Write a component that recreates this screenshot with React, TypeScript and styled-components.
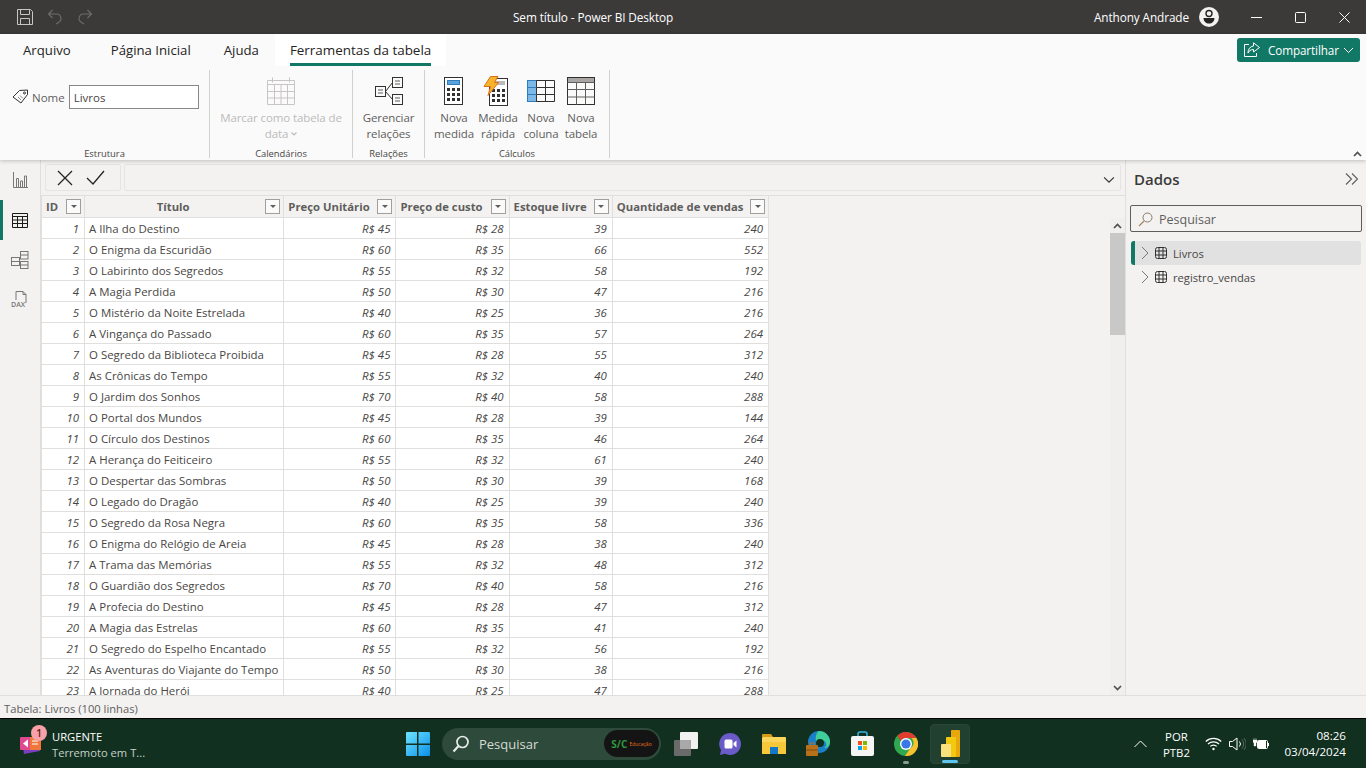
import React from "react";
import styled, { createGlobalStyle } from "styled-components";

const FONT = `"Open Sans", "Noto Sans", "Liberation Sans", sans-serif`;

const Global = createGlobalStyle`
  html, body { margin: 0; padding: 0; height: 100%; overflow: hidden; }
  body { font-family: ${FONT}; font-size: 12px; color: #323130; background: #f3f2f1; }
  * { box-sizing: border-box; }
`;

const Page = styled.div`
  width: 1366px; height: 768px; display: flex; flex-direction: column; overflow: hidden;
`;

/* ---------- title bar ---------- */
const TitleBar = styled.header`
  height: 34px; flex: none; background: #3b3a39; color: #fff; display: grid;
  grid-template-columns: 513px auto 1fr; align-items: center;
`;
const QuickAccess = styled.div`
  display: flex; align-items: center; gap: 14px; padding-left: 17px;
`;
const Title = styled.div`font-size: 11.8px; letter-spacing: -0.1px;`;
const WindowSide = styled.div`display: flex; align-items: center; justify-content: flex-end;`;
const UserName = styled.span`font-size: 11.8px; letter-spacing: -0.1px; margin-right: 10px;`;
const WinButton = styled.div`
  width: 44px; height: 34px; display: flex; align-items: center; justify-content: center;
`;
const Avatar = styled.div`display:flex; margin-right: 15px;`;

/* ---------- ribbon ---------- */
const Ribbon = styled.section`
  height: 126px; flex: none; background: #fafafa; position: relative; z-index: 2;
  box-shadow: 0 1px 4px rgba(0,0,0,.22); display: flex; flex-direction: column;
`;
const TabRow = styled.nav`
  height: 32px; display: flex; align-items: stretch; padding-right: 6px; position: relative;
`;
const Tab = styled.div<{ $active?: boolean; $left: number; $pad: number }>`
  margin-left: ${p => p.$left}px; padding: 0 ${p => p.$pad}px; font-size: ${p => (p.$active ? 13.45 : 13.2)}px;
  display: flex; align-items: center; color: #252423; position: relative;
  background: ${p => (p.$active ? "#fff" : "transparent")};
  ${p => p.$active && `
    font-weight: 500;
    &::after { content: ""; position: absolute; left: ${p.$pad}px; right: ${p.$pad}px; bottom: 0; height: 3px; background: #117865; }
  `}
`;
const ShareButton = styled.button`
  margin-left: auto; margin-top: 4px; width: 123px; height: 24px; background: #117865; color: #fff;
  border: 0; border-radius: 3px; display: flex; align-items: center; gap: 8px; padding: 0 0 0 7px;
  font: 11.7px ${FONT}; letter-spacing: -0.1px;
`;
const ShareCaret = styled.span`display: flex; margin-left: -4px;`;
const Groups = styled.div`display: flex; padding-top: 4px;`;
const Group = styled.div<{ $w: number }>`
  width: ${p => p.$w}px; height: 88px; border-right: 1px solid #d2d0ce; display: flex; flex-direction: column;
`;
const GroupBody = styled.div<{ $shift?: number }>`
  flex: 1; display: flex; justify-content: center; min-height: 0; padding-right: ${p => p.$shift ?? 0}px;
`;
const GroupLabel = styled.div`
  height: 14px; line-height: 14px; text-align: center; font-size: 9.4px; color: #484644;
  margin-top: 1px; margin-bottom: -3px;
`;
const RibbonBtn = styled.div<{ $w: number; $disabled?: boolean }>`
  width: ${p => p.$w}px; display: flex; flex-direction: column; align-items: center;
  color: ${p => (p.$disabled ? "#bdbbb9" : "#605e5c")}; text-align: center;
  font-size: 11.5px; line-height: 16px; padding-top: 6px; letter-spacing: -0.1px; white-space: nowrap;
`;
const RibbonIcon = styled.div<{ $nudge?: number }>`
  height: 30px; margin-bottom: 4px; display: flex; align-items: center; justify-content: center;
  padding-right: ${p => p.$nudge ?? 0}px;
`;
const NameField = styled.div`
  display: flex; align-items: flex-start; padding-top: 15px; gap: 4px; width: 100%; padding-left: 12px;
  font-size: 11.5px; color: #605e5c;
`;
const TagSlot = styled.span`display: flex; margin-top: 4px; margin-right: -1px;`;
const NameLabel = styled.span`line-height: 26px;`;
const NameInput = styled.div`
  width: 130px; height: 24px; border: 1px solid #8a8886; background: #fff; padding-left: 4px;
  line-height: 24px; color: #484644; font-size: 11.5px;
`;
const DataLine = styled.span`display: flex; align-items: center; gap: 3px;`;
const Collapse = styled.div`position: absolute; right: 4px; bottom: 3px; display: flex;`;

/* ---------- main ---------- */
const Main = styled.main`flex: 1; min-height: 0; display: flex;`;
const Nav = styled.aside`
  width: 41px; flex: none; border-right: 1px solid #e1dfdd; background: #f3f2f1;
  display: flex; flex-direction: column;
`;
const NavItem = styled.div<{ $active?: boolean }>`
  height: 40px; display: flex; align-items: center; justify-content: center; position: relative;
  ${p => p.$active && `box-shadow: inset 3px 0 0 #117865;`}
`;
const Center = styled.div`flex: 1; min-width: 0; display: flex; flex-direction: column;`;
const FormulaBar = styled.div`
  height: 36px; flex: none; display: flex; gap: 3px; padding: 4px; border-bottom: 1px solid #e1dfdd;
`;
const FormulaActions = styled.div`
  width: 76px; border: 1px solid #e6e4e2; border-radius: 2px; display: flex; align-items: center;
  justify-content: center; gap: 13px; padding-right: 4px;
`;
const FormulaInput = styled.div`
  flex: 1; border: 1px solid #e6e4e2; border-radius: 2px; display: flex; align-items: center;
  justify-content: flex-end; padding: 5px 5px 0 0;
`;
const GridArea = styled.div`flex: 1; min-height: 0; display: flex; justify-content: space-between;`;
const TableClip = styled.div`flex: 1; min-width: 0; overflow: hidden;`;
const DataTable = styled.table`
  border-collapse: collapse; table-layout: fixed; width: 728px; background: #fff; font-size: 11.45px;
`;
const Head = styled.th<{ $w: number }>`
  width: ${p => p.$w}px; height: 21px; padding: 1px 3px 0 4px; background: #f3f2f1; color: #605e5c;
  border: 1px solid #e1dfdd; border-top: 0; font-weight: 700; font-size: 11.3px; white-space: nowrap;
`;
const HeadInner = styled.div`
  display: flex; align-items: center; justify-content: space-between;
`;
const HeadText = styled.span<{ $center?: boolean }>`
  ${p => p.$center && `flex: 1; text-align: center; padding-right: 8px;`}
`;
const FilterBtn = styled.span`
  width: 15px; height: 15px; border: 1px solid #a19f9d; background: #fafafa; flex: none;
  display: flex; align-items: center; justify-content: center;
  &::before { content: ""; border: 3px solid transparent; border-top: 3px solid #605e5c; border-bottom: 0; }
`;
const Cell = styled.td<{ $num?: boolean }>`
  height: 21px; padding: 1px 5px 0 4px; border: 1px solid #e1dfdd; white-space: nowrap; overflow: hidden;
  color: #484644;
  ${p => p.$num && `text-align: right; font-style: italic;`}
`;
const Scrollbar = styled.div`
  width: 15px; flex: none; margin-top: 22px; display: flex; flex-direction: column; background: #f3f2f1;
`;
const ScrollArrow = styled.div`height: 15px; flex: none; display: flex; align-items: center; justify-content: center; background: #f0efee;`;
const ScrollTrack = styled.div`flex: 1; background: #f0efee;`;
const ScrollThumb = styled.div`height: 102px; background: #c8c8c8;`;

/* ---------- right panel ---------- */
const Panel = styled.aside`
  width: 241px; flex: none; border-left: 1px solid #e1dfdd; background: #f3f2f1; padding: 0 4px;
`;
const PanelHead = styled.div`
  height: 39px; display: flex; align-items: center; justify-content: space-between;
  padding: 0 3px 2px 4px; font-size: 15px; font-weight: 600; color: #3b3a39;
`;
const SearchBox = styled.div`
  margin-top: 6px; height: 27px; border: 1px solid #605e5c; border-radius: 2px; display: flex; align-items: center;
  padding: 1px 0 0 7px; gap: 6px; font-size: 12.5px; color: #605e5c; margin-bottom: 9px;
`;
const TreeRow = styled.div<{ $selected?: boolean }>`
  height: 24px; margin-left: 1px; width: 230px; display: flex; align-items: center; padding-left: 10px; gap: 6px;
  font-size: 11.2px; color: #484644; border-radius: 3px;
  ${p => p.$selected && `background: #e1e1e1; border-left: 4px solid #117865; padding-left: 6px;`}
`;

/* ---------- status ---------- */
const StatusBar = styled.footer`
  height: 24px; flex: none; background: #f3f2f1; border-top: 1px solid #e1dfdd; border-bottom: 1px solid #000;
  padding-left: 4px; line-height: 26px; font-size: 11.2px; color: #605e5c;
`;

/* ---------- taskbar ---------- */
const Taskbar = styled.div`
  height: 49px; flex: none; background: #12301f; color: #fff; display: grid;
  grid-template-columns: 406px auto 1fr; align-items: center; font-size: 11.2px;
`;
const News = styled.div`display: flex; align-items: center; padding-left: 20px; gap: 6px;`;
const NewsIcon = styled.div`position: relative; width: 26px; height: 26px; display: flex; margin-top: 3px;`;
const Badge = styled.span`
  position: absolute; right: -1px; top: -7px; width: 16px; height: 16px; border-radius: 50%; background: #f9a0a8;
  color: #5a2020; font-size: 10px; font-weight: 600; line-height: 16px; text-align: center;
`;
const NewsText = styled.div`display: flex; flex-direction: column; line-height: 16px; margin-top: 3px;`;
const NewsSub = styled.span`color: #c6d0ca;`;
const TaskCenter = styled.div`display: flex; align-items: center;`;
const StartIcon = styled.div`display: flex; margin-right: 12px;`;
const SearchPill = styled.div`
  width: 219px; height: 32px; border-radius: 16px; background: #2e4a3a; display: flex; align-items: center;
  padding: 0 2px 0 10px; gap: 9px; font-size: 13px; color: #d5dcd8; margin-right: 3px;
`;
const PillLogo = styled.div`
  margin-left: auto; width: 55px; height: 27px; border-radius: 14px; background: #141414; display: flex;
  align-items: center; justify-content: center; gap: 2px; color: #2e9a3f; font-size: 10px; font-weight: 700;
`;
const PillLogoSub = styled.span`color: #e8701a; font-size: 5px; font-weight: 400;`;
const TaskIcon = styled.div<{ $active?: boolean }>`
  width: 44px; height: 40px; display: flex; align-items: center; justify-content: center; position: relative; border-radius: 4px;
  ${p => p.$active && `background: #22402f; border: 1px solid #2a4636; width: 40px; margin-left: 2px;`}
`;
const Indicator = styled.span<{ $on?: boolean }>`
  position: absolute; bottom: 0; left: 50%; transform: translateX(-50%); height: 3px; border-radius: 2px;
  width: ${p => (p.$on ? 16 : 6)}px; background: ${p => (p.$on ? "#5cc4f0" : "#8a9a90")};
`;
const Tray = styled.div`display: flex; align-items: center; justify-content: flex-end; padding-right: 20px;`;
const Lang = styled.div`
  text-align: center; line-height: 16px; font-size: 11.4px; width: 36px; margin: 2px 11px 0 11px;
`;
const TrayIcons = styled.div`display: flex; align-items: center; gap: 7px; margin-right: 15px;`;
const Clock = styled.div`text-align: right; line-height: 16px; font-size: 11.6px;`;

/* ---------- icons ---------- */
const SaveIcon = () => (
  <svg width="16" height="16" viewBox="0 0 16 16" fill="none" stroke="#c8c6c4">
    <path d="M.5.5h13l2 2v13H.5z" /><path d="M3.5.5v5h9v-5M3.5 15.5v-6h9v6" />
  </svg>
);
const UndoIcon = ({ flip }: { flip?: boolean }) => (
  <svg width="16" height="16" viewBox="0 0 16 16" fill="none" stroke="#6f6d6b" strokeWidth="1.1" style={flip ? { transform: "scaleX(-1)" } : undefined}>
    <path d="M5.5 1 1.5 5l4 4M1.5 5h8a4.5 4.5 0 0 1 2 8.5L9 15" />
  </svg>
);
const PersonIcon = () => (
  <svg width="20" height="20" viewBox="0 0 20 20">
    <circle cx="10" cy="10" r="10" fill="#f3f2f1" />
    <circle cx="10" cy="6.5" r="3" fill="none" stroke="#252423" strokeWidth="1.4" />
    <path d="M4.5 11h11c0 3.5-2.5 5.5-5.5 5.5S4.5 14.5 4.5 11z" fill="#252423" />
  </svg>
);
const MinIcon = () => <svg width="11" height="11" viewBox="0 0 11 11"><path d="M0 5.5h11" stroke="#fff" /></svg>;
const MaxIcon = () => <svg width="11" height="11" viewBox="0 0 11 11"><rect x=".5" y=".5" width="10" height="10" rx="1" fill="none" stroke="#fff" /></svg>;
const CloseIcon = () => <svg width="11" height="11" viewBox="0 0 11 11"><path d="m.5.5 10 10m0-10-10 10" stroke="#fff" /></svg>;
const ShareIcon = () => (
  <svg width="16" height="16" viewBox="0 0 16 16" fill="none" stroke="#fff">
    <path d="M5 2.5H.5v12h12V11" /><path d="M9.5.8 15.5 5.5l-6 4.5V7.5C6.5 7.5 5 9 4 11c0-4 2-6.500 5.500-7z" strokeLinejoin="round" />
  </svg>
);
const Chevron = ({ c = "#fff", s = 11 }: { c?: string; s?: number }) => (
  <svg width={s} height={s} viewBox="0 0 11 11" fill="none" stroke={c}><path d="m1 3 4.500 4.500L10 3" /></svg>
);
const MiniChevron = () => (
  <svg width="6" height="4" viewBox="0 0 6 4" fill="none" stroke="#bdbbb9" strokeWidth="1.200"><path d="m.5.5 2.500 2.500L5.500.5" /></svg>
);
const TagIcon = () => (
  <svg width="17" height="15" viewBox="0 0 17 15" fill="none" stroke="#323130" strokeWidth="1">
    <path d="M1 8 7.500 1.500 15.500 1v4.500L9 14z" strokeLinejoin="round" /><circle cx="12.500" cy="4" r="1" /><path d="m6 8 3 3M8 6.500l3 3" stroke="#8a8886" />
  </svg>
);
const CalendarIcon = () => (
  <svg width="28" height="28" viewBox="0 0 28 28" fill="none" stroke="#c8c6c4">
    <path d="M.5 3.500h27v24H.5zM.5 7.500h27M.5 14.500h27M.5 21h27M7.500 7.500v20M14 7.500v20M20.500 7.500v20M5.500.5v5M22.500.5v5" />
  </svg>
);
const RelationsIcon = () => (
  <svg width="28" height="28" viewBox="0 0 28 28" fill="none" stroke="#323130">
    <rect x=".5" y="9.500" width="10" height="10" /><rect x="17.500" y=".5" width="10" height="10" /><rect x="17.500" y="17.500" width="10" height="10" />
    <path d="M3 13h5M3 16h5M20 4h5M20 7h5M20 21h5M20 24h5" stroke="#605e5c" /><path d="m10.500 14.500 7-9M10.500 14.500l7 8" />
  </svg>
);
const Dots = ({ x, y }: { x: number; y: number }) => (
  <g fill="#323130">
    {[0, 1, 2].flatMap(r => [0, 1, 2].map(c => <rect key={`${r}-${c}`} x={x + c * 5} y={y + r * 5} width="3" height="3" />))}
  </g>
);
const MeasureIcon = () => (
  <svg width="20" height="28" viewBox="0 0 20 28">
    <rect x=".5" y=".5" width="18" height="27" fill="#fff" stroke="#323130" />
    <rect x="3.500" y="3.500" width="12" height="4" fill="#5ba4dc" stroke="#2f7dbd" />
    <Dots x={3} y={11} />
  </svg>
);
const QuickIcon = () => (
  <svg width="26" height="30" viewBox="0 0 26 30">
    <rect x="6.500" y="2.500" width="18" height="27" fill="#fff" stroke="#323130" />
    <rect x="10" y="5" width="12" height="4" fill="#bdbbb9" />
    <Dots x={9} y={13} />
    <path d="M7.500.5h7.500l-3.500 6h4L5 19.500l2.500-9H1z" fill="#f7b32b" stroke="#d9701a" />
  </svg>
);
const ColumnIcon = () => (
  <svg width="28" height="22" viewBox="0 0 28 22" fill="none" stroke="#323130">
    <rect x=".5" y=".5" width="9" height="21" fill="#7db8e6" stroke="#2f7dbd" />
    <path d="M9.500.5h18v21h-18zM18.500.5v21M9.500 7.500h18M9.500 14.500h18" />
    <path d="M.5 7.500h9M.5 14.500h9" stroke="#2f7dbd" />
  </svg>
);
const TableIcon = () => (
  <svg width="28" height="28" viewBox="0 0 28 28" fill="none" stroke="#605e5c">
    <rect x=".5" y=".5" width="27" height="27" stroke="#323130" />
    <rect x="1" y="1" width="26" height="4" fill="#a8a6a4" stroke="none" />
    <path d="M.5 5.500h27M.5 12.500h27M.5 20h27M9.500 5.500v22M18.500 5.500v22" />
  </svg>
);
const NavReport = () => (
  <svg width="15" height="16" viewBox="0 0 15 16" fill="none" stroke="#797775">
    <path d="M.5 0v15.500H15M3.500 15V6.500h2V15M7.500 15V9h2v6M11.500 15V4h2v11" />
  </svg>
);
const NavTable = () => (
  <svg width="16" height="15" viewBox="0 0 16 15" fill="none" stroke="#1b1a19">
    <path d="M.5.500h15v14H.5zM.5 3.500h15M.5 7h15M.5 10.500h15M5.500 3.500v11M10.500 3.500v11" />
  </svg>
);
const NavModel = () => (
  <svg width="18" height="18" viewBox="0 0 18 18" fill="none" stroke="#797775">
    <rect x=".5" y="6.500" width="8" height="8" /><rect x="9.500" y=".5" width="7.500" height="7.500" /><rect x="9.500" y="10.500" width="7.500" height="7" />
    <path d="M.5 10.500h8M9.500 4h7.500M9.500 14h7.500" />
  </svg>
);
const NavDax = () => (
  <svg width="18" height="18" viewBox="0 0 18 18" fill="none" stroke="#797775">
    <path d="M5 9V.5h7l3 3V12M12 .5v3h3" />
    <text x="0" y="16" fontSize="7" fontWeight="600" fill="#797775" stroke="none" fontFamily="Open Sans">DAX</text>
  </svg>
);
const XIcon = () => <svg width="16" height="16" viewBox="0 0 16 16" fill="none" stroke="#252423" strokeWidth="1.3"><path d="m1 1 14 14M15 1 1 15" /></svg>;
const CheckIcon = () => <svg width="19" height="15" viewBox="0 0 19 15" fill="none" stroke="#252423" strokeWidth="1.3"><path d="m1 8 6 6L18 1" /></svg>;
const DoubleChevron = () => (
  <svg width="14" height="12" viewBox="0 0 14 12" fill="none" stroke="#605e5c" strokeWidth="1.1"><path d="m1 .5 5.500 5.500L1 11.500M7 .5l5.500 5.500L7 11.500" /></svg>
);
const SearchGlass = () => (
  <svg width="15" height="15" viewBox="0 0 15 15" fill="none" stroke="#8a7a6a"><circle cx="9.500" cy="5.500" r="4.500" /><path d="M6 9 1 14" stroke="#a08a60" strokeWidth="1.200" /></svg>
);
const TreeArrow = () => <svg width="8" height="14" viewBox="0 0 8 14" fill="none" stroke="#797775"><path d="m1 1 6 6-6 6" /></svg>;
const TreeTable = () => (
  <svg width="12" height="12" viewBox="0 0 12 12" fill="none" stroke="#323130"><rect x=".5" y=".5" width="11" height="11" rx="2" /><path d="M.5 4h11M.5 8h11M4 .5v11M8 .5v11" /></svg>
);
const ArrowUp = () => <svg width="9" height="6" viewBox="0 0 9 6" fill="none" stroke="#505050" strokeWidth="1.700"><path d="m1 5 3.500-3.500L8 5" /></svg>;
const ArrowDown = () => <svg width="9" height="6" viewBox="0 0 9 6" fill="none" stroke="#505050" strokeWidth="1.700"><path d="m1 1 3.500 3.500L8 1" /></svg>;

const NewsGlyph = () => (
  <svg width="22" height="20" viewBox="0 0 22 20" style={{ marginTop: 3 }}>
    <path d="M2 6 16 2l4 14-16 3z" fill="#7a3fc0" />
    <rect y="2" width="21" height="13" rx="1" fill="#e0488f" />
    <rect x="10" y="2" width="11" height="13" fill="#f0763a" />
    <path d="m3 8.500 5-4v8z" fill="#fff" /><path d="M12 6h6M12 9h6" stroke="#fff" />
  </svg>
);
const StartGlyph = () => (
  <svg width="24" height="24" viewBox="0 0 24 24">
    <defs><linearGradient id="w" x1="0" y1="0" x2="1" y2="1"><stop offset="0" stopColor="#6fe4ff" /><stop offset="1" stopColor="#0a8fe8" /></linearGradient></defs>
    <path d="M0 1a1 1 0 0 1 1-1h10v11.500H0zM12.500 0H23a1 1 0 0 1 1 1v10.500H12.500zM0 13h11v11H1a1 1 0 0 1-1-1zM12.500 13H24v10a1 1 0 0 1-1 1H12.500z" fill="url(#w)" />
  </svg>
);
const PillGlass = () => (
  <svg width="18" height="18" viewBox="0 0 18 18" fill="none" stroke="#e6ece8" strokeWidth="1.700"><circle cx="10.500" cy="7" r="5.500" /><path d="M6.500 11 1.500 16.500" strokeWidth="2.200" /></svg>
);
const CopyGlyph = () => (
  <svg width="24" height="24" viewBox="0 0 24 24"><rect y="8" width="17" height="16" rx="1" fill="#6a6a6a" /><rect x="6" width="18" height="17" rx="1" fill="#f2f2f2" /><rect x="6" y="8" width="11" height="9" fill="#a9a9a9" /></svg>
);
const MeetGlyph = () => (
  <svg width="24" height="24" viewBox="0 0 24 24"><path d="M12 1a11 11 0 1 1-5 20.800L2 23l1-5A11 11 0 0 1 12 1z" fill="#6a5bc8" /><rect x="6.500" y="7.500" width="8" height="9" rx="1.500" fill="#fff" /><path d="m15.500 11 3-2.500v7l-3-2.500z" fill="#fff" /></svg>
);
const FolderGlyph = () => (
  <svg width="24" height="22" viewBox="0 0 24 22"><path d="M0 2a1 1 0 0 1 1-1h8l2 3H0z" fill="#d79a12" /><rect y="4" width="24" height="17" rx="1" fill="#fcd55a" /><path d="M0 9h24v11a1 1 0 0 1-1 1H1a1 1 0 0 1-1-1z" fill="#f8c83a" /><rect x="8" y="14" width="8" height="7" fill="#1478c8" /></svg>
);
const EdgeGlyph = () => (
  <svg width="24" height="26" viewBox="0 0 24 26">
    <circle cx="13" cy="11" r="11" fill="#1a7fc8" /><path d="M13 0a11 11 0 0 1 11 11c0 4-3 6-6 6 2-1 3-3 2-5-2-4-8-3-9 0-3-4 0-12 2-12z" fill="#3fd09a" />
    <circle cx="14" cy="12" r="4" fill="#12301f" />
    <rect y="14" width="12" height="11" rx="1" fill="#b8701a" /><rect x="4" y="12" width="4" height="3" fill="none" stroke="#b8701a" /><path d="M0 19h12" stroke="#7a4a10" />
  </svg>
);
const StoreGlyph = () => (
  <svg width="23" height="25" viewBox="0 0 23 25">
    <path d="M7 5V3a2 2 0 0 1 2-2h5a2 2 0 0 1 2 2v2" fill="none" stroke="#35b6e8" strokeWidth="1.500" />
    <rect y="5" width="23" height="20" rx="2" fill="#f5f5f5" />
    <rect x="7" y="10" width="4" height="4" fill="#f25022" /><rect x="12" y="10" width="4" height="4" fill="#7fba00" /><rect x="7" y="15" width="4" height="4" fill="#00a4ef" /><rect x="12" y="15" width="4" height="4" fill="#ffb900" />
  </svg>
);
const ChromeGlyph = () => (
  <svg width="24" height="24" viewBox="0 0 24 24">
    <circle cx="12" cy="12" r="12" fill="#2fa84f" />
    <path d="M12 0a12 12 0 0 1 10.400 6H12a6 6 0 0 0-5.200 3L3.500 4A12 12 0 0 1 12 0z" fill="#e33b2e" />
    <path d="M22.400 6A12 12 0 0 1 11 24l5.500-8a6 6 0 0 0 .7-10z" fill="#fbc02d" />
    <circle cx="12" cy="12" r="6" fill="#fff" /><circle cx="12" cy="12" r="4.600" fill="#3b78e7" />
  </svg>
);
const PowerBiGlyph = () => (
  <svg width="19" height="27" viewBox="0 0 19 27">
    <rect x="10" width="9" height="27" rx="1" fill="#e8a80c" /><rect x="5" y="7" width="10" height="20" rx="1" fill="#f2c811" /><rect y="14" width="10" height="13" rx="1" fill="#fbe27a" />
  </svg>
);
const TrayUp = () => <svg width="13" height="8" viewBox="0 0 13 8" fill="none" stroke="#fff"><path d="m.5 7 6-6 6 6" /></svg>;
const Wifi = () => (
  <svg width="17" height="14" viewBox="0 0 17 14" fill="none" stroke="#fff" strokeWidth="1.200">
    <path d="M.8 4.500a11 11 0 0 1 15.400 0M3 7a8 8 0 0 1 11 0M5.300 9.400a4.500 4.500 0 0 1 6.400 0" /><circle cx="8.500" cy="12" r="1.200" fill="#fff" stroke="none" />
  </svg>
);
const Volume = () => (
  <svg width="17" height="14" viewBox="0 0 17 14" fill="none" stroke="#fff">
    <path d="M.5 4.500h3L8 1v12L3.500 9.500h-3z" /><path d="M10.500 4.500a4 4 0 0 1 0 5" /><path d="M13 2.500a7 7 0 0 1 0 9M15 1a9 9 0 0 1 0 12" stroke="#5a6a60" />
  </svg>
);
const Battery = () => (
  <svg width="16" height="12" viewBox="0 0 16 12">
    <rect x="4.500" y="2.500" width="10" height="8" rx="1" fill="none" stroke="#fff" /><rect x="5" y="3" width="8" height="7" fill="#fff" />
    <rect x="15" y="5" width="1" height="3" fill="#fff" />
    <path d="M1 0v2M3 0v2M0 2h4v2l-1 1v3H1V5L0 4z" fill="#fff" stroke="#fff" strokeWidth=".4" />
  </svg>
);

/* ---------- data ---------- */
type Row = [string, number, number, number, number];
const rows: Row[] = [
  ["A Ilha do Destino", 45, 28, 39, 240],
  ["O Enigma da Escuridão", 60, 35, 66, 552],
  ["O Labirinto dos Segredos", 55, 32, 58, 192],
  ["A Magia Perdida", 50, 30, 47, 216],
  ["O Mistério da Noite Estrelada", 40, 25, 36, 216],
  ["A Vingança do Passado", 60, 35, 57, 264],
  ["O Segredo da Biblioteca Proibida", 45, 28, 55, 312],
  ["As Crônicas do Tempo", 55, 32, 40, 240],
  ["O Jardim dos Sonhos", 70, 40, 58, 288],
  ["O Portal dos Mundos", 45, 28, 39, 144],
  ["O Círculo dos Destinos", 60, 35, 46, 264],
  ["A Herança do Feiticeiro", 55, 32, 61, 240],
  ["O Despertar das Sombras", 50, 30, 39, 168],
  ["O Legado do Dragão", 40, 25, 39, 240],
  ["O Segredo da Rosa Negra", 60, 35, 58, 336],
  ["O Enigma do Relógio de Areia", 45, 28, 38, 240],
  ["A Trama das Memórias", 55, 32, 48, 312],
  ["O Guardião dos Segredos", 70, 40, 58, 216],
  ["A Profecia do Destino", 45, 28, 47, 312],
  ["A Magia das Estrelas", 60, 35, 41, 240],
  ["O Segredo do Espelho Encantado", 55, 32, 56, 192],
  ["As Aventuras do Viajante do Tempo", 50, 30, 38, 216],
  ["A Jornada do Herói", 40, 25, 47, 288],
];
const columns = [
  { t: "ID", w: 43 },
  { t: "Título", w: 199, center: true },
  { t: "Preço Unitário", w: 112 },
  { t: "Preço de custo", w: 113 },
  { t: "Estoque livre", w: 103 },
  { t: "Quantidade de vendas", w: 156 },
];

export default function App() {
  return (
    <Page>
      <Global />
      <TitleBar>
        <QuickAccess><SaveIcon /><UndoIcon /><UndoIcon flip /></QuickAccess>
        <Title>Sem título - Power BI Desktop</Title>
        <WindowSide>
          <UserName>Anthony Andrade</UserName>
          <Avatar><PersonIcon /></Avatar>
          <WinButton><MinIcon /></WinButton>
          <WinButton><MaxIcon /></WinButton>
          <WinButton><CloseIcon /></WinButton>
        </WindowSide>
      </TitleBar>

      <Ribbon>
        <TabRow>
          <Tab $left={8} $pad={15}>Arquivo</Tab>
          <Tab $left={10} $pad={15}>Página Inicial</Tab>
          <Tab $left={3} $pad={15}>Ajuda</Tab>
          <Tab $left={1} $pad={15} $active>Ferramentas da tabela</Tab>
          <ShareButton><ShareIcon />Compartilhar<ShareCaret><Chevron /></ShareCaret></ShareButton>
        </TabRow>
        <Groups>
          <Group $w={210}>
            <GroupBody>
              <NameField><TagSlot><TagIcon /></TagSlot><NameLabel>Nome</NameLabel><NameInput>Livros</NameInput></NameField>
            </GroupBody>
            <GroupLabel>Estrutura</GroupLabel>
          </Group>
          <Group $w={143}>
            <GroupBody>
              <RibbonBtn $w={130} $disabled>
                <RibbonIcon><CalendarIcon /></RibbonIcon>
                Marcar como tabela de
                <DataLine>data <MiniChevron /></DataLine>
              </RibbonBtn>
            </GroupBody>
            <GroupLabel>Calendários</GroupLabel>
          </Group>
          <Group $w={72}>
            <GroupBody>
              <RibbonBtn $w={60}><RibbonIcon><RelationsIcon /></RibbonIcon>Gerenciar<br />relações</RibbonBtn>
            </GroupBody>
            <GroupLabel>Relações</GroupLabel>
          </Group>
          <Group $w={185}>
            <GroupBody $shift={2}>
              <RibbonBtn $w={44}><RibbonIcon><MeasureIcon /></RibbonIcon>Nova<br />medida</RibbonBtn>
              <RibbonBtn $w={44}><RibbonIcon $nudge={5}><QuickIcon /></RibbonIcon>Medida<br />rápida</RibbonBtn>
              <RibbonBtn $w={42}><RibbonIcon><ColumnIcon /></RibbonIcon>Nova<br />coluna</RibbonBtn>
              <RibbonBtn $w={38}><RibbonIcon><TableIcon /></RibbonIcon>Nova<br />tabela</RibbonBtn>
            </GroupBody>
            <GroupLabel>Cálculos</GroupLabel>
          </Group>
        </Groups>
        <Collapse><ArrowUp /></Collapse>
      </Ribbon>

      <Main>
        <Nav>
          <NavItem><NavReport /></NavItem>
          <NavItem $active><NavTable /></NavItem>
          <NavItem><NavModel /></NavItem>
          <NavItem><NavDax /></NavItem>
        </Nav>
        <Center>
          <FormulaBar>
            <FormulaActions><XIcon /><CheckIcon /></FormulaActions>
            <FormulaInput><Chevron c="#323130" s={12} /></FormulaInput>
          </FormulaBar>
          <GridArea>
            <TableClip>
              <DataTable>
                <thead>
                  <tr>
                    {columns.map(c => (
                      <Head key={c.t} $w={c.w}>
                        <HeadInner><HeadText $center={c.center}>{c.t}</HeadText><FilterBtn /></HeadInner>
                      </Head>
                    ))}
                  </tr>
                </thead>
                <tbody>
                  {rows.map((r, i) => (
                    <tr key={r[0]}>
                      <Cell $num>{i + 1}</Cell>
                      <Cell>{r[0]}</Cell>
                      <Cell $num>R$ {r[1]}</Cell>
                      <Cell $num>R$ {r[2]}</Cell>
                      <Cell $num>{r[3]}</Cell>
                      <Cell $num>{r[4]}</Cell>
                    </tr>
                  ))}
                </tbody>
              </DataTable>
            </TableClip>
            <Scrollbar>
              <ScrollArrow><ArrowUp /></ScrollArrow>
              <ScrollThumb />
              <ScrollTrack />
              <ScrollArrow><ArrowDown /></ScrollArrow>
            </Scrollbar>
          </GridArea>
        </Center>
        <Panel>
          <PanelHead>Dados<DoubleChevron /></PanelHead>
          <SearchBox><SearchGlass />Pesquisar</SearchBox>
          <TreeRow $selected><TreeArrow /><TreeTable />Livros</TreeRow>
          <TreeRow><TreeArrow /><TreeTable />registro_vendas</TreeRow>
        </Panel>
      </Main>

      <StatusBar>Tabela: Livros (100 linhas)</StatusBar>

      <Taskbar>
        <News>
          <NewsIcon><NewsGlyph /><Badge>1</Badge></NewsIcon>
          <NewsText><span>URGENTE</span><NewsSub>Terremoto em T...</NewsSub></NewsText>
        </News>
        <TaskCenter>
          <StartIcon><StartGlyph /></StartIcon>
          <SearchPill>
            <PillGlass />Pesquisar
            <PillLogo>S/C<PillLogoSub>Educação</PillLogoSub></PillLogo>
          </SearchPill>
          <TaskIcon><CopyGlyph /></TaskIcon>
          <TaskIcon><MeetGlyph /></TaskIcon>
          <TaskIcon><FolderGlyph /></TaskIcon>
          <TaskIcon><EdgeGlyph /></TaskIcon>
          <TaskIcon><StoreGlyph /></TaskIcon>
          <TaskIcon><ChromeGlyph /><Indicator /></TaskIcon>
          <TaskIcon $active><PowerBiGlyph /><Indicator $on /></TaskIcon>
        </TaskCenter>
        <Tray>
          <TrayUp />
          <Lang>POR<br />PTB2</Lang>
          <TrayIcons><Wifi /><Volume /><Battery /></TrayIcons>
          <Clock>08:26<br />03/04/2024</Clock>
        </Tray>
      </Taskbar>
    </Page>
  );
}
